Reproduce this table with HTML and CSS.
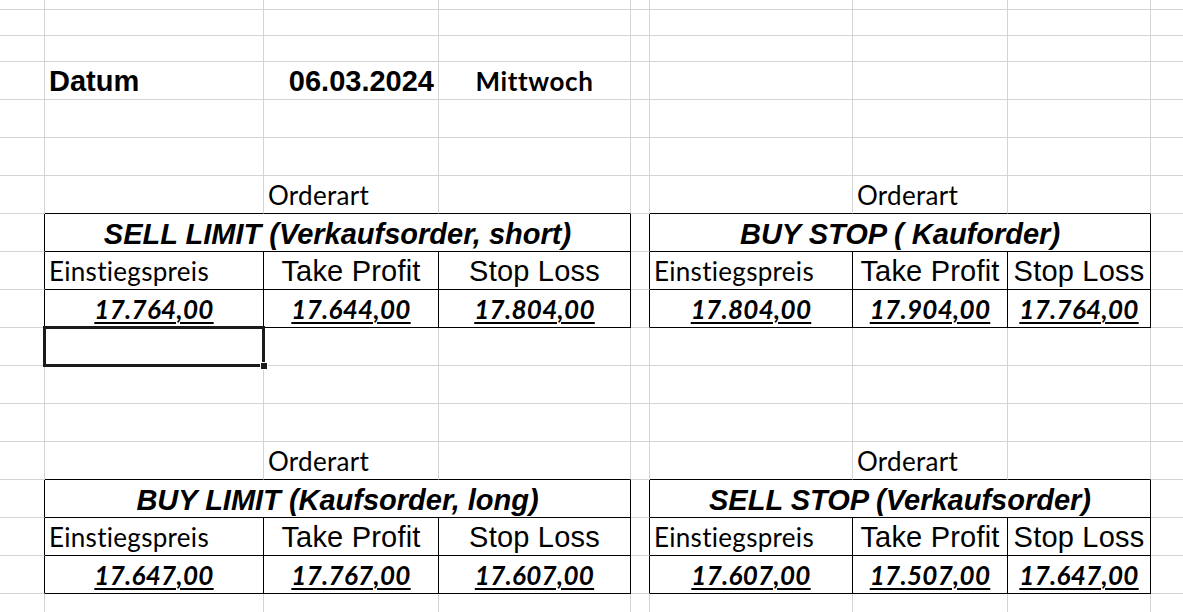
FILE: index.html
```html
<!DOCTYPE html>
<html lang="de">
<head>
<meta charset="utf-8">
<title>Orderarten</title>
<link rel="stylesheet" href="styles.css">
</head>
<body>
<div class="sheet">
  <div class="row h10"><div class="c"></div><div class="c"></div><div class="c"></div><div class="c"></div><div class="c"></div><div class="c"></div><div class="c"></div><div class="c"></div><div class="c"></div></div>
  <div class="row h26"><div class="c"></div><div class="c"></div><div class="c"></div><div class="c"></div><div class="c"></div><div class="c"></div><div class="c"></div><div class="c"></div><div class="c"></div></div>
  <div class="row h26"><div class="c"></div><div class="c"></div><div class="c"></div><div class="c"></div><div class="c"></div><div class="c"></div><div class="c"></div><div class="c"></div><div class="c"></div></div>
  <div class="row">
    <div class="c"></div>
    <div class="c l arial-b">Datum</div>
    <div class="c r arial-b">06.03.2024</div>
    <div class="c m cal-b">Mittwoch</div>
    <div class="c"></div><div class="c"></div><div class="c"></div><div class="c"></div><div class="c"></div>
  </div>
  <div class="row"><div class="c"></div><div class="c"></div><div class="c"></div><div class="c"></div><div class="c"></div><div class="c"></div><div class="c"></div><div class="c"></div><div class="c"></div></div>
  <div class="row"><div class="c"></div><div class="c"></div><div class="c"></div><div class="c"></div><div class="c"></div><div class="c"></div><div class="c"></div><div class="c"></div><div class="c"></div></div>

  <!-- Table set 1 -->
  <div class="row">
    <div class="c"></div>
    <div class="c kb"></div>
    <div class="c kb l cal">Orderart</div>
    <div class="c kb"></div>
    <div class="c"></div>
    <div class="c kb"></div>
    <div class="c kb l cal">Orderart</div>
    <div class="c kb"></div>
    <div class="c"></div>
  </div>
  <div class="row">
    <div class="c kr"></div>
    <div class="c s3 kr kb m arial-bi t">SELL LIMIT (Verkaufsorder, short)</div>
    <div class="c kr"></div>
    <div class="c s3 kr kb m arial-bi t">BUY STOP ( Kauforder)</div>
    <div class="c"></div>
  </div>
  <div class="row">
    <div class="c kr"></div>
    <div class="c kr kb l cal">Einstiegspreis</div>
    <div class="c kr kb m arial">Take Profit</div>
    <div class="c kr kb m arial">Stop Loss</div>
    <div class="c kr"></div>
    <div class="c kr kb l cal">Einstiegspreis</div>
    <div class="c kr kb m arial">Take Profit</div>
    <div class="c kr kb m arial">Stop Loss</div>
    <div class="c"></div>
  </div>
  <div class="row">
    <div class="c kr"></div>
    <div class="c kr kb m val">17.764,00</div>
    <div class="c kr kb m val">17.644,00</div>
    <div class="c kr kb m val">17.804,00</div>
    <div class="c kr"></div>
    <div class="c kr kb m val">17.804,00</div>
    <div class="c kr kb m val">17.904,00</div>
    <div class="c kr kb m val">17.764,00</div>
    <div class="c"></div>
  </div>
  <div class="row">
    <div class="c"></div>
    <div class="c selcell"><div class="sel"><div class="handle"></div></div></div>
    <div class="c"></div><div class="c"></div><div class="c"></div><div class="c"></div><div class="c"></div><div class="c"></div><div class="c"></div>
  </div>
  <div class="row"><div class="c"></div><div class="c"></div><div class="c"></div><div class="c"></div><div class="c"></div><div class="c"></div><div class="c"></div><div class="c"></div><div class="c"></div></div>
  <div class="row"><div class="c"></div><div class="c"></div><div class="c"></div><div class="c"></div><div class="c"></div><div class="c"></div><div class="c"></div><div class="c"></div><div class="c"></div></div>

  <!-- Table set 2 -->
  <div class="row">
    <div class="c"></div>
    <div class="c kb"></div>
    <div class="c kb l cal">Orderart</div>
    <div class="c kb"></div>
    <div class="c"></div>
    <div class="c kb"></div>
    <div class="c kb l cal">Orderart</div>
    <div class="c kb"></div>
    <div class="c"></div>
  </div>
  <div class="row">
    <div class="c kr"></div>
    <div class="c s3 kr kb m arial-bi t">BUY LIMIT (Kaufsorder, long)</div>
    <div class="c kr"></div>
    <div class="c s3 kr kb m arial-bi t">SELL STOP (Verkaufsorder)</div>
    <div class="c"></div>
  </div>
  <div class="row">
    <div class="c kr"></div>
    <div class="c kr kb l cal">Einstiegspreis</div>
    <div class="c kr kb m arial">Take Profit</div>
    <div class="c kr kb m arial">Stop Loss</div>
    <div class="c kr"></div>
    <div class="c kr kb l cal">Einstiegspreis</div>
    <div class="c kr kb m arial">Take Profit</div>
    <div class="c kr kb m arial">Stop Loss</div>
    <div class="c"></div>
  </div>
  <div class="row">
    <div class="c kr"></div>
    <div class="c kr kb m val">17.647,00</div>
    <div class="c kr kb m val">17.767,00</div>
    <div class="c kr kb m val">17.607,00</div>
    <div class="c kr"></div>
    <div class="c kr kb m val">17.607,00</div>
    <div class="c kr kb m val">17.507,00</div>
    <div class="c kr kb m val">17.647,00</div>
    <div class="c"></div>
  </div>
  <div class="row"><div class="c"></div><div class="c"></div><div class="c"></div><div class="c"></div><div class="c"></div><div class="c"></div><div class="c"></div><div class="c"></div><div class="c"></div></div>
</div>
</body>
</html>
```

FILE: styles.css
```css
html, body {
  margin: 0;
  padding: 0;
  background: #ffffff;
}

body {
  width: 1183px;
  height: 612px;
  overflow: hidden;
  color: #000;
}

.sheet {
  display: flex;
  flex-direction: column;
}

.row {
  display: grid;
  grid-template-columns: 45px 219px 175px 192px 19px 203px 155px 143px 40px;
  height: 38px;
  flex: none;
}

.row.h10 { height: 10px; }
.row.h26 { height: 26px; }

.c {
  box-sizing: border-box;
  min-width: 0;
  border-right: 1px solid #d4d4d4;
  border-bottom: 1px solid #d4d4d4;
  display: flex;
  align-items: flex-end;
  padding: 0 4px 4px;
  line-height: 28px;
  white-space: nowrap;
  font-variant-ligatures: none;
}

.s3 { grid-column: span 3; }

.kr { border-right-color: #000; }
.kb { border-bottom-color: #000; }

.l { justify-content: flex-start; }
.m { justify-content: center; }
.r { justify-content: flex-end; }

.arial {
  font-family: "Liberation Sans", Arial, sans-serif;
  font-size: 29px;
  letter-spacing: 0.2px;
}

.arial-b {
  font-family: "Liberation Sans", Arial, sans-serif;
  font-size: 29px;
  font-weight: bold;
}

.arial-bi {
  font-family: "Liberation Sans", Arial, sans-serif;
  font-size: 29px;
  font-weight: bold;
  font-style: italic;
}

.t { padding-bottom: 3px; }

.cal {
  font-family: Lato, "Noto Sans", sans-serif;
  font-size: 26px;
  letter-spacing: 0.3px;
}

.cal-b {
  font-family: Lato, "Noto Sans", sans-serif;
  font-size: 26px;
  font-weight: bold;
  letter-spacing: 0.6px;
}

.val {
  font-family: Lato, "Noto Sans", sans-serif;
  font-size: 26px;
  font-weight: bold;
  font-style: italic;
  letter-spacing: 0.3px;
  text-decoration: underline;
  text-decoration-thickness: 2px;
  text-underline-offset: 3px;
}

.selcell { position: relative; }

.sel {
  position: absolute;
  left: -2px;
  top: -2px;
  width: 222px;
  height: 41px;
  box-sizing: border-box;
  border: 3px solid #1b1b1b;
  z-index: 2;
}

.handle {
  position: absolute;
  left: 214px;
  top: 33px;
  width: 6px;
  height: 6px;
  background: #1b1b1b;
  border: 1px solid #fff;
}
```
